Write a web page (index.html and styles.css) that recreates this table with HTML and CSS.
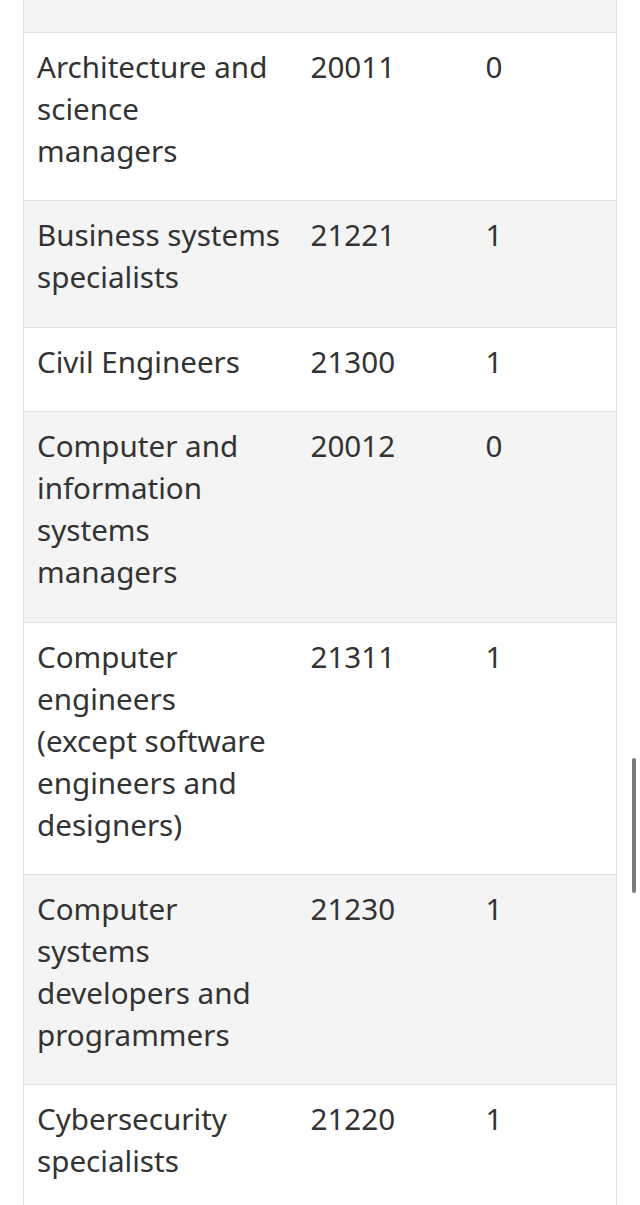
FILE: index.html
```html
<!DOCTYPE html>
<html lang="en">
<head>
<meta charset="utf-8">
<title>Occupations</title>
<link rel="stylesheet" href="styles.css">
</head>
<body>
<div class="page">
  <table class="occ">
    <colgroup>
      <col class="c1"><col class="c2"><col class="c3">
    </colgroup>
    <tbody>
      <tr class="stub"><td></td><td></td><td></td></tr>
      <tr><td>Architecture and science managers</td><td>20011</td><td>0</td></tr>
      <tr><td>Business systems specialists</td><td>21221</td><td>1</td></tr>
      <tr><td>Civil Engineers</td><td>21300</td><td>1</td></tr>
      <tr><td>Computer and information systems managers</td><td>20012</td><td>0</td></tr>
      <tr><td>Computer engineers (except software engineers and designers)</td><td>21311</td><td>1</td></tr>
      <tr><td>Computer systems developers and programmers</td><td>21230</td><td>1</td></tr>
      <tr><td>Cybersecurity specialists</td><td>21220</td><td>1</td></tr>
    </tbody>
  </table>
  <div class="scrollbar"></div>
</div>
</body>
</html>
```

FILE: styles.css
```css
html, body {
  margin: 0;
  padding: 0;
  background: #ffffff;
}
body {
  font-family: "Noto Sans", "Open Sans", sans-serif;
  color: #333333;
  overflow: hidden;
  height: 1205px;
}
.page {
  padding: 0 23px 0 23px;
}
.occ {
  width: 594px;
  border-collapse: collapse;
  table-layout: fixed;
  border-left: 1px solid #e2e2e2;
  border-right: 1px solid #e2e2e2;
}
.c1 { width: 274px; }
.c2 { width: 175px; }
.c3 { width: auto; }
.occ td {
  font-size: 29.6px;
  line-height: 42px;
  padding: 13px 12px 28.4px 13px;
  vertical-align: top;
  border-top: 1px solid #e2e2e2;
}
.occ td:first-child {
  padding-right: 17px;
}
.occ tr:nth-child(odd) td {
  background: #f4f4f4;
}
.occ tr:nth-child(even) td {
  background: #ffffff;
}
.occ tr.stub td {
  height: 32px;
  padding: 0;
  border-top: none;
}
.scrollbar {
  position: fixed;
  right: 4px;
  top: 758px;
  width: 4px;
  height: 135px;
  border-radius: 2px;
  background: #7a7a7a;
}
```
